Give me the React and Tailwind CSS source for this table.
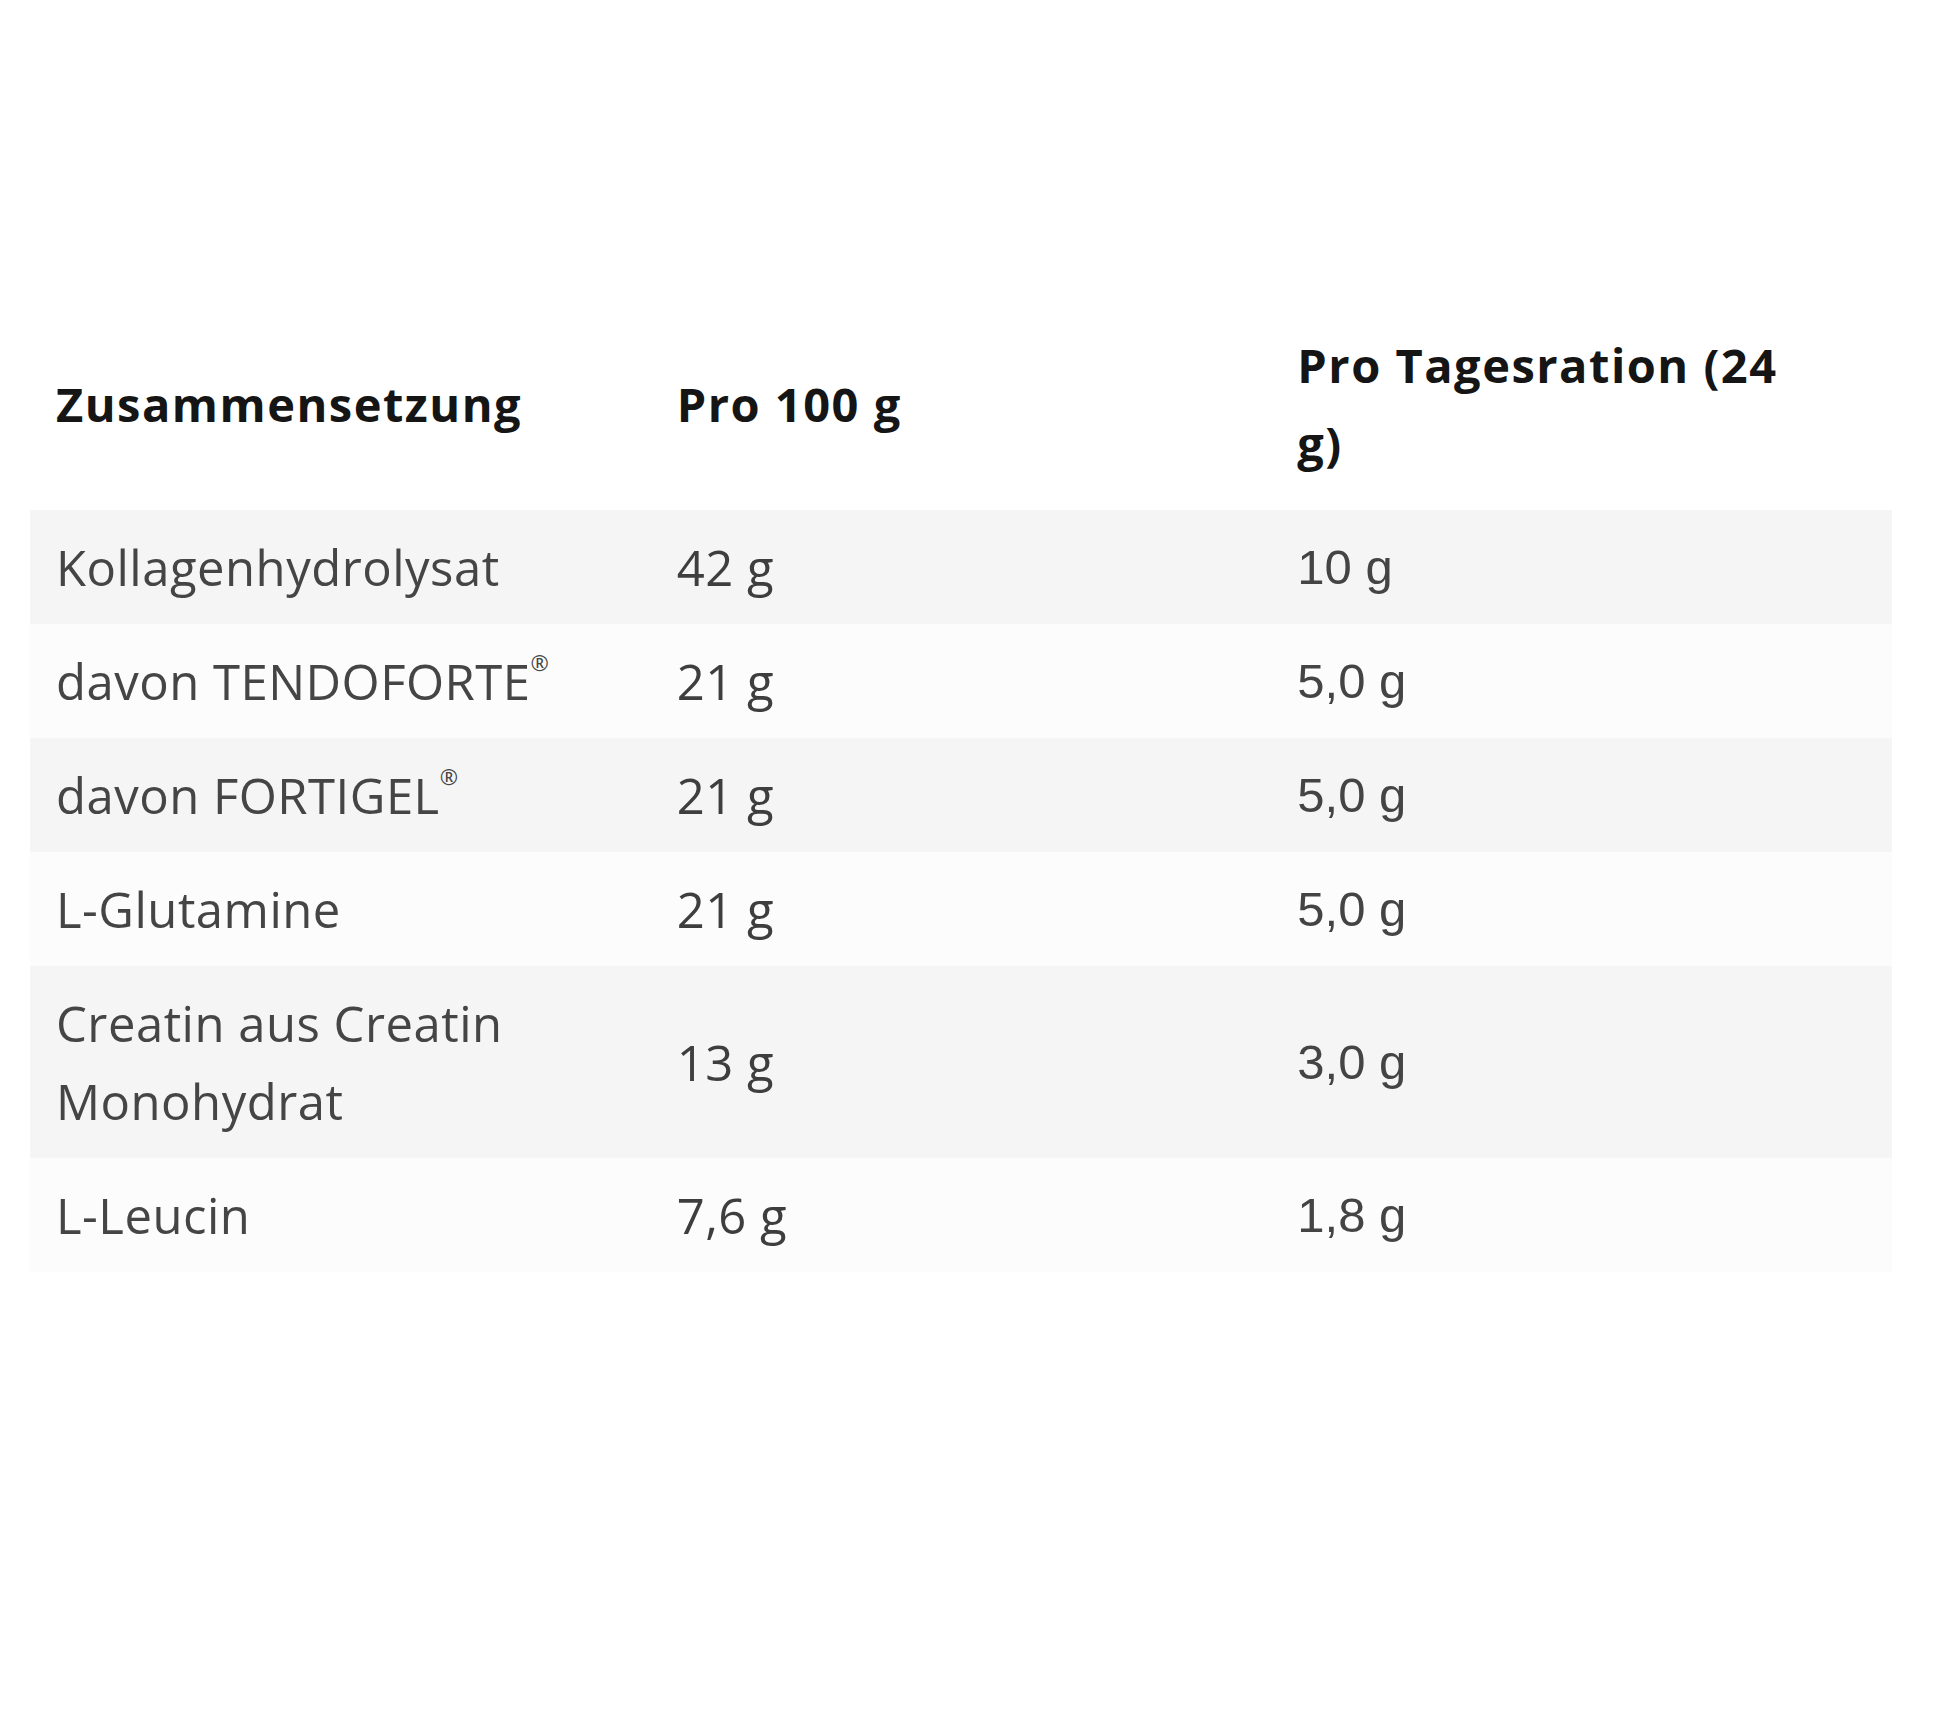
import React from "react";

const rows = [
  { name: "Kollagenhydrolysat", a: "42 g", b: "10 g" },
  { name: "davon TENDOFORTE®", a: "21 g", b: "5,0 g" },
  { name: "davon FORTIGEL®", a: "21 g", b: "5,0 g" },
  { name: "L-Glutamine", a: "21 g", b: "5,0 g" },
  { name: "Creatin aus Creatin Monohydrat", a: "13 g", b: "3,0 g" },
  { name: "L-Leucin", a: "7,6 g", b: "1,8 g" },
];

function Name({ text }) {
  if (text.endsWith("®")) {
    return (
      <>
        {text.slice(0, -1)}
        <sup className="text-[22px] align-[18px] leading-none">®</sup>
      </>
    );
  }
  return text;
}

const th =
  "px-[26px] py-[28px] text-left align-middle font-['Open_Sans',sans-serif] font-bold text-[47px] leading-[78px] text-[#151515] tracking-[1.5px]";

export default function App() {
  return (
    <div className="w-[1946px] h-[1728px] bg-white overflow-hidden">
      <div className="pt-[298px] pl-[30px]">
        <table className="w-[1862px] table-fixed border-collapse">
          <thead>
            <tr className="bg-white">
              <th className={th}>Zusammensetzung</th>
              <th className={th}>Pro 100 g</th>
              <th className={th}>
                <div className="max-w-[500px]">Pro Tagesration (24 g)</div>
              </th>
            </tr>
          </thead>
          <tbody>
            {rows.map((r, i) => (
              <tr
                key={r.name}
                className={i % 2 === 0 ? "bg-[#f5f5f5]" : "bg-[#fcfcfc]"}
              >
                <td className="px-[26px] py-[18px] align-middle font-['Open_Sans',sans-serif] text-[49px] leading-[78px] text-[#454545] tracking-[0.5px]">
                  <Name text={r.name} />
                </td>
                <td className="px-[26px] py-[18px] align-middle font-['Open_Sans',sans-serif] text-[49px] leading-[78px] text-[#3e3e3e] tracking-[0.5px]">
                  {r.a}
                </td>
                <td className="px-[26px] py-[18px] align-middle font-['Liberation_Sans',Arial,sans-serif] text-[49px] leading-[78px] text-[#444444]">
                  {r.b}
                </td>
              </tr>
            ))}
          </tbody>
        </table>
      </div>
    </div>
  );
}
